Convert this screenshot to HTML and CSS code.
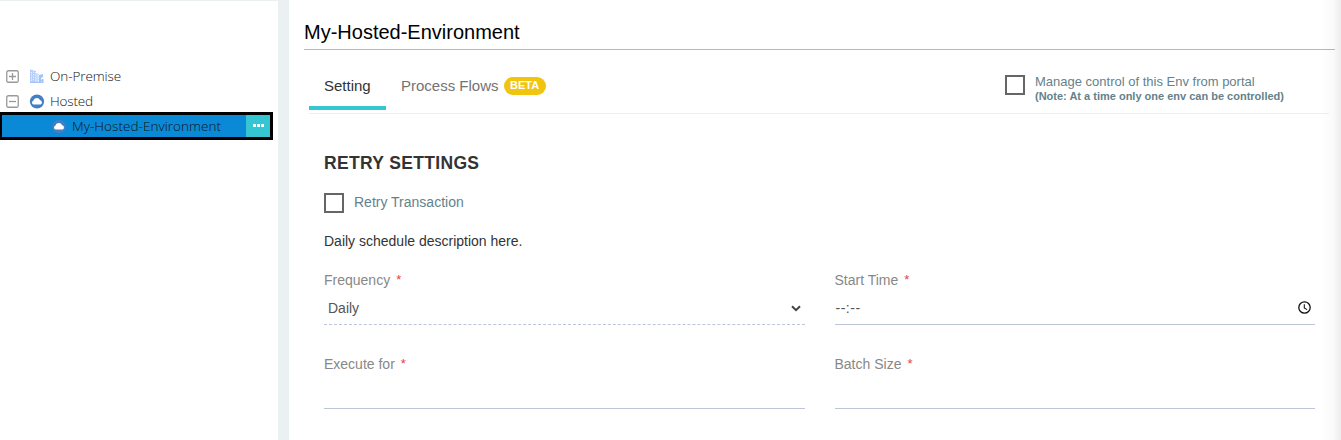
FILE: index.html
```html
<!DOCTYPE html>
<html lang="en">
<head>
<meta charset="utf-8">
<title>My-Hosted-Environment</title>
<link rel="stylesheet" href="styles.css">
</head>
<body>
<div class="app">
  <aside class="sidebar">
    <div class="node">
      <svg class="toggle" width="13" height="13" viewBox="0 0 13 13"><rect x=".75" y=".75" width="11.5" height="11.5" rx="1.5"/><path d="M3 6.5h7M6.5 3v7"/></svg>
      <svg class="icon" width="16" height="16" viewBox="0 0 16 16"><path fill="#b5cffa" d="M1 1.500l6 1.500v12H1z"/><path fill="#c9dcfb" d="M7 5l3 1v9H7z"/><path fill="#a3c4f8" d="M10 7l4-1v3l-2 1v1h2.500v4H10zM1 14h13.500v1H1z"/><path stroke="#edf3fe" fill="none" d="M2.500 4v9M4.500 3.500v10M6.500 4v9M9.500 7v7M12.500 10.500v3" stroke-dasharray="1.300 1.200"/></svg>
      <span class="label label-premise">On-Premise</span>
    </div>
    <div class="node">
      <svg class="toggle" width="13" height="13" viewBox="0 0 13 13"><rect x=".75" y=".75" width="11.5" height="11.5" rx="1.5"/><path d="M3 6.500h7"/></svg>
      <svg class="icon" width="16" height="16" viewBox="0 0 16 16"><circle cx="8" cy="8.500" r="7.100" fill="#437fc4"/><path fill="#fff" d="M4.600 11.500a1.900 1.900 0 0 1-.3-3.700 3.600 3.600 0 0 1 6.800-.5 2.200 2.200 0 0 1 .5 4.200z"/></svg>
      <span class="label label-hosted">Hosted</span>
    </div>
    <div class="node node-selected">
      <svg class="icon" width="16" height="16" viewBox="0 0 16 16"><circle cx="8" cy="8.500" r="6.800" fill="#437fc4"/><path fill="#fff" d="M4.600 11.500a1.900 1.900 0 0 1-.3-3.700 3.600 3.600 0 0 1 6.800-.5 2.200 2.200 0 0 1 .5 4.200z"/></svg>
      <span class="label label-env">My-Hosted-Environment</span>
      <button class="more" aria-label="More"><i></i><i></i><i></i></button>
    </div>
  </aside>
  <main class="main">
    <h1 class="title"><span>My-Hosted-Environment</span></h1>
    <div class="tabs">
      <div class="tab tab-active"><span>Setting</span></div>
      <div class="tab"><span>Process Flows</span><span class="badge">BETA</span></div>
      <label class="control"><span class="box"></span><span class="control-text"><span class="control-main">Manage control of this Env from portal</span><b>(Note: At a time only one env can be controlled)</b></span></label>
    </div>
    <section class="form">
      <h2 class="heading"><span>RETRY SETTINGS</span></h2>
      <label class="retry"><span class="box"></span><span class="retry-text">Retry Transaction</span></label>
      <p class="description"><span>Daily schedule description here.</span></p>
      <div class="grid">
        <div class="field">
          <div class="name"><span>Frequency</span><em>*</em></div>
          <div class="input input-dashed"><span>Daily</span><svg width="10" height="7" viewBox="0 0 10 7"><path d="M1 1.200l4 4 4-4" fill="none" stroke="#444" stroke-width="2"/></svg></div>
        </div>
        <div class="field">
          <div class="name"><span>Start Time</span><em>*</em></div>
          <div class="input input-time"><span class="time">--:--</span><svg class="clock" width="13" height="13" viewBox="0 0 13 13"><g fill="none" stroke="#111"><circle cx="6.500" cy="6.500" r="5.700" stroke-width="1.300"/><path d="M6.300 3.200v3.700l2.800 1.700" stroke-width="1.100"/></g></svg></div>
        </div>
        <div class="field">
          <div class="name"><span>Execute for</span><em>*</em></div>
          <div class="input"></div>
        </div>
        <div class="field">
          <div class="name"><span>Batch Size</span><em>*</em></div>
          <div class="input"></div>
        </div>
      </div>
    </section>
  </main>
  <div class="edge"></div>
</div>
</body>
</html>
```
FILE: styles.css
```css
* { box-sizing: border-box; }
body { margin: 0; background: #fff; font-family: "Liberation Sans", Arial, sans-serif; font-size: 14px; color: #333; }
.app { display: flex; position: relative; width: 1341px; height: 440px; overflow: hidden; }

.sidebar { width: 278px; flex: none; padding-top: 62px; border-top: 1px solid #ebf0f3; font-family: "Open Sans", "Noto Sans", sans-serif; font-size: 13.5px; font-weight: 300; color: #111; }
.node { display: flex; align-items: center; height: 25px; padding-left: 6px; }
.toggle { flex: none; margin-top: 1px; fill: none; stroke: #999; stroke-width: 1.3; }
.icon { flex: none; margin-left: 10px; }
.label { margin-left: 5px; white-space: nowrap; line-height: 24px; }
.label-premise { letter-spacing: -.08px; }
.label-hosted { letter-spacing: -.15px; }
.label-env { letter-spacing: .05px; }
.node-selected { width: 273px; height: 28px; margin-top: -1px; padding-left: 49px; border: 3px solid #000; border-left-width: 2px; background: #0a8ad6; }
.node-selected .icon { margin-left: 0; }
.more { display: flex; align-items: center; justify-content: center; gap: 1px; width: 24px; height: 22px; margin-left: auto; padding: 0 0 2px; border: 0; background: #36c6d3; }
.more i { width: 3px; height: 3px; background: #fff; }

.main { flex: 1; padding: 0 6px 0 15px; border-left: 11px solid #ebf0f3; }
.title { margin: 0; height: 50px; padding-top: 20px; border-bottom: 1px solid #b8b8b8; font-size: 20px; font-weight: 400; line-height: 24px; color: #000; }
.tabs { display: flex; height: 64px; margin: 0 6px 0 5px; border-bottom: 1px solid #eee; }
.tab { display: flex; align-items: center; height: 60px; padding: 12px 15px 0; font-size: 15px; color: #737373; }
.tab span:first-child { position: relative; top: -1px; }
.tab-active { width: 77px; padding-top: 16px; border-bottom: 4px solid #36c6d3; color: #333; }
.badge { margin-left: 5px; width: 42px; height: 18px; border-radius: 9px; background: #f1c40f; color: #fff; font-size: 11px; font-weight: 700; line-height: 17px; text-align: center; }
.box { flex: none; width: 20px; height: 20px; border: 2px solid #666; }
.control { display: flex; width: 324px; margin-left: auto; padding-top: 25px; color: #65828a; }
.control-text { display: flex; flex-direction: column; margin: -1px 0 0 10px; line-height: 15px; white-space: nowrap; }
.control b { width: max-content; font-size: 11px; line-height: 14px; }
.control-main { width: max-content; font-size: 13px; }

.form { padding: 38px 20px 0; }
.heading { margin: 0; font-size: 17.500px; letter-spacing: .33px; line-height: 22px; }
.retry { display: flex; height: 20px; margin-top: 19px; color: #65828a; line-height: 18px; }
.retry-text { margin-left: 10px; }
.description { margin: 20px 0 0; line-height: 16px; }
.grid { display: grid; grid-template-columns: 481px 480px; column-gap: 29.500px; row-gap: 31px; margin-top: 23px; }
.name { display: flex; line-height: 16px; color: #888; }
.name em { margin-left: 6px; color: #e73d4a; font-style: normal; font-size: 13px; }
.input { display: flex; align-items: center; justify-content: space-between; height: 37px; padding: 4px 4px 0; border-bottom: 1px solid #bcc6d8; color: #555; }
.input-dashed { border-bottom-style: dashed; }
.input-time { padding-left: 1px; }
.time { letter-spacing: .5px; }
.clock { margin-bottom: 2px; }

.edge { position: absolute; top: 0; right: 0; width: 20px; height: 440px; background: linear-gradient(to right, rgba(0,0,0,0), rgba(0,0,0,.02) 60%, rgba(0,0,0,.07)); }
```
